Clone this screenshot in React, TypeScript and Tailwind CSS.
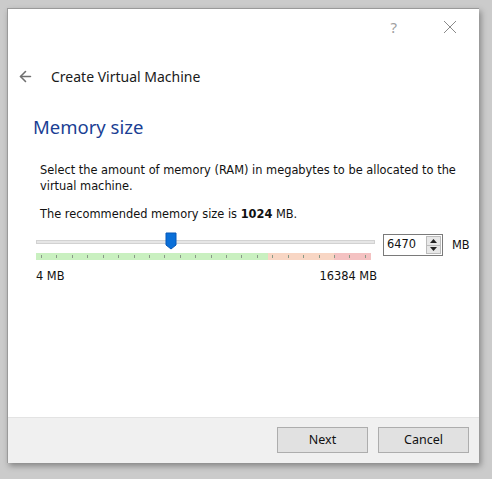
import { ArrowLeft } from "lucide-react";

const body = { fontFamily: '"DejaVu Sans", Tahoma, sans-serif' };
const ui = { fontFamily: '"Noto Sans", "Open Sans", sans-serif' };

function Ticks() {
  const ticks = Array.from({ length: 22 }, (_, i) => i);
  return (
    <div className="relative h-[7px] w-[335px] flex">
      <div className="h-full w-[232px] bg-[#c9f0c0]" />
      <div className="h-full w-[66px] bg-[#f8d6c4]" />
      <div className="h-full w-[37px] bg-[#f4c2c2]" />
      <div className="absolute inset-0 flex justify-between px-[5px]">
        {ticks.map((t) => (
          <div key={t} className="w-px h-[3px] mt-[2px] bg-[#8a9a88]" />
        ))}
      </div>
    </div>
  );
}

export default function App() {
  return (
    <div className="w-[492px] h-[479px] bg-[#cbcbcb] pt-[8px] pl-[7px]">
      <div className="w-[472px] h-[455px] bg-white flex flex-col shadow-[2px_3px_6px_rgba(0,0,0,0.35)] border-l border-t border-[#9a9a9a]">
        <div className="h-[51px] flex items-start justify-end pr-[22px] pt-[9px] gap-[46px] text-[#a0a0a0]">
          <span style={ui} className="text-[15px] leading-none mt-[2px]">?</span>
          <svg width="14" height="14" viewBox="0 0 14 14" className="mt-[2px]">
            <path d="M1 1L13 13M13 1L1 13" stroke="#8a8a8a" strokeWidth="1" />
          </svg>
        </div>
        <div className="flex items-center h-[32px] pl-[9px]">
          <ArrowLeft size={17} strokeWidth={2.25} className="text-[#707070]" />
          <span style={ui} className="ml-[17px] text-[14px] text-[#1a1a1a]">
            Create Virtual Machine
          </span>
        </div>
        <div className="flex-1 flex flex-col pl-[25px] pr-[8px]">
          <div style={ui} className="mt-[21px] text-[18.5px] text-[#1b3f94] leading-[28px]">
            Memory size
          </div>
          <p style={body} className="mt-[21px] pl-[7px] text-[11.4px] leading-[16px] text-[#111] whitespace-nowrap">
            Select the amount of memory (RAM) in megabytes to be allocated to the
            <br />
            virtual machine.
          </p>
          <p style={body} className="mt-[12px] pl-[7px] text-[11.4px] leading-[16px] text-[#111]">
            The recommended memory size is <b>1024</b> MB.
          </p>
          <div className="flex items-start mt-[10px] pl-[3px]">
            <div className="w-[341px] shrink-0 flex flex-col">
              <div className="relative h-[19px]">
                <div className="absolute left-0 right-[2px] top-[8px] h-[4px] bg-[#e6e6e6] border border-[#d2d2d2]" />
                <svg
                  width="12"
                  height="18"
                  viewBox="0 0 12 18"
                  className="absolute left-[129px] top-0"
                >
                  <path d="M1 1H11V13L6 17L1 13Z" fill="#0a6fd8" stroke="#0758b8" />
                </svg>
              </div>
              <div className="mt-[2px]">
                <Ticks />
              </div>
              <div style={body} className="flex justify-between mt-[8px] text-[11.4px] text-[#111]">
                <span>4 MB</span>
                <span>16384 MB</span>
              </div>
            </div>
            <div className="ml-[6px] mt-[2px] w-[60px] h-[22px] shrink-0 border border-[#7a7a7a] flex items-center bg-white">
              <span style={body} className="flex-1 pl-[3px] text-[11.4px] text-[#111]">
                6470
              </span>
              <div className="w-[15px] h-[18px] mr-[1px] flex flex-col border border-[#bcbcbc] bg-[#e8e8e8]">
                <div className="flex-1 flex items-center justify-center border-b border-[#bcbcbc]">
                  <svg width="7" height="4" viewBox="0 0 7 4">
                    <path d="M0 4L3.5 0L7 4Z" fill="#222" />
                  </svg>
                </div>
                <div className="flex-1 flex items-center justify-center">
                  <svg width="7" height="4" viewBox="0 0 7 4">
                    <path d="M0 0L3.5 4L7 0Z" fill="#222" />
                  </svg>
                </div>
              </div>
            </div>
            <span style={body} className="ml-[9px] mt-[5px] text-[11.4px] text-[#111] shrink-0">
              MB
            </span>
          </div>
        </div>
        <div className="h-[46px] bg-[#f0f0f0] border-t border-[#e3e3e3] flex items-start justify-end pt-[9px] pr-[10px] gap-[10px]">
          <button style={ui} className="w-[91px] h-[26px] bg-[#e1e1e1] border border-[#adadad] text-[12.5px] text-[#111]">
            Next
          </button>
          <button style={ui} className="w-[91px] h-[26px] bg-[#e1e1e1] border border-[#adadad] text-[12.5px] text-[#111]">
            Cancel
          </button>
        </div>
      </div>
    </div>
  );
}
